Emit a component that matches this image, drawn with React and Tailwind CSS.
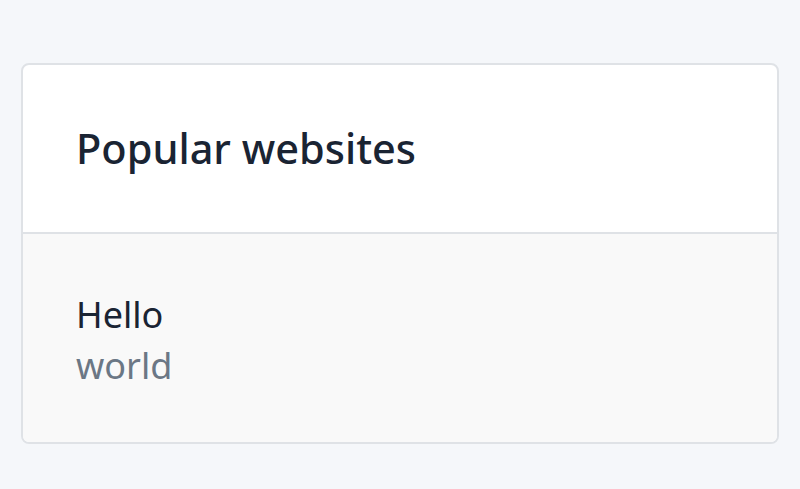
import React from "react";

const App = () => {
  return (
    <div className="min-h-screen bg-[#f5f7fa] px-[21px] pt-[63px] font-['Noto_Sans',sans-serif]">
      <div className="rounded-[8px] border-2 border-[#dfe2e6] bg-white overflow-hidden">
        <div className="h-[169px] flex items-center px-[53px] border-b-2 border-[#dfe2e6]">
          <h2 className="text-[41.5px] font-medium text-[#1a2433] leading-none">Popular websites</h2>
        </div>
        <div className="h-[208px] bg-[#f9f9f9] px-[53px] pt-[55px]">
          <div className="text-[36px] leading-[51px] text-[#1a2433]">Hello</div>
          <div className="text-[36px] leading-[51px] text-[#6b7785]">world</div>
        </div>
      </div>
    </div>
  );
};

export default App;
